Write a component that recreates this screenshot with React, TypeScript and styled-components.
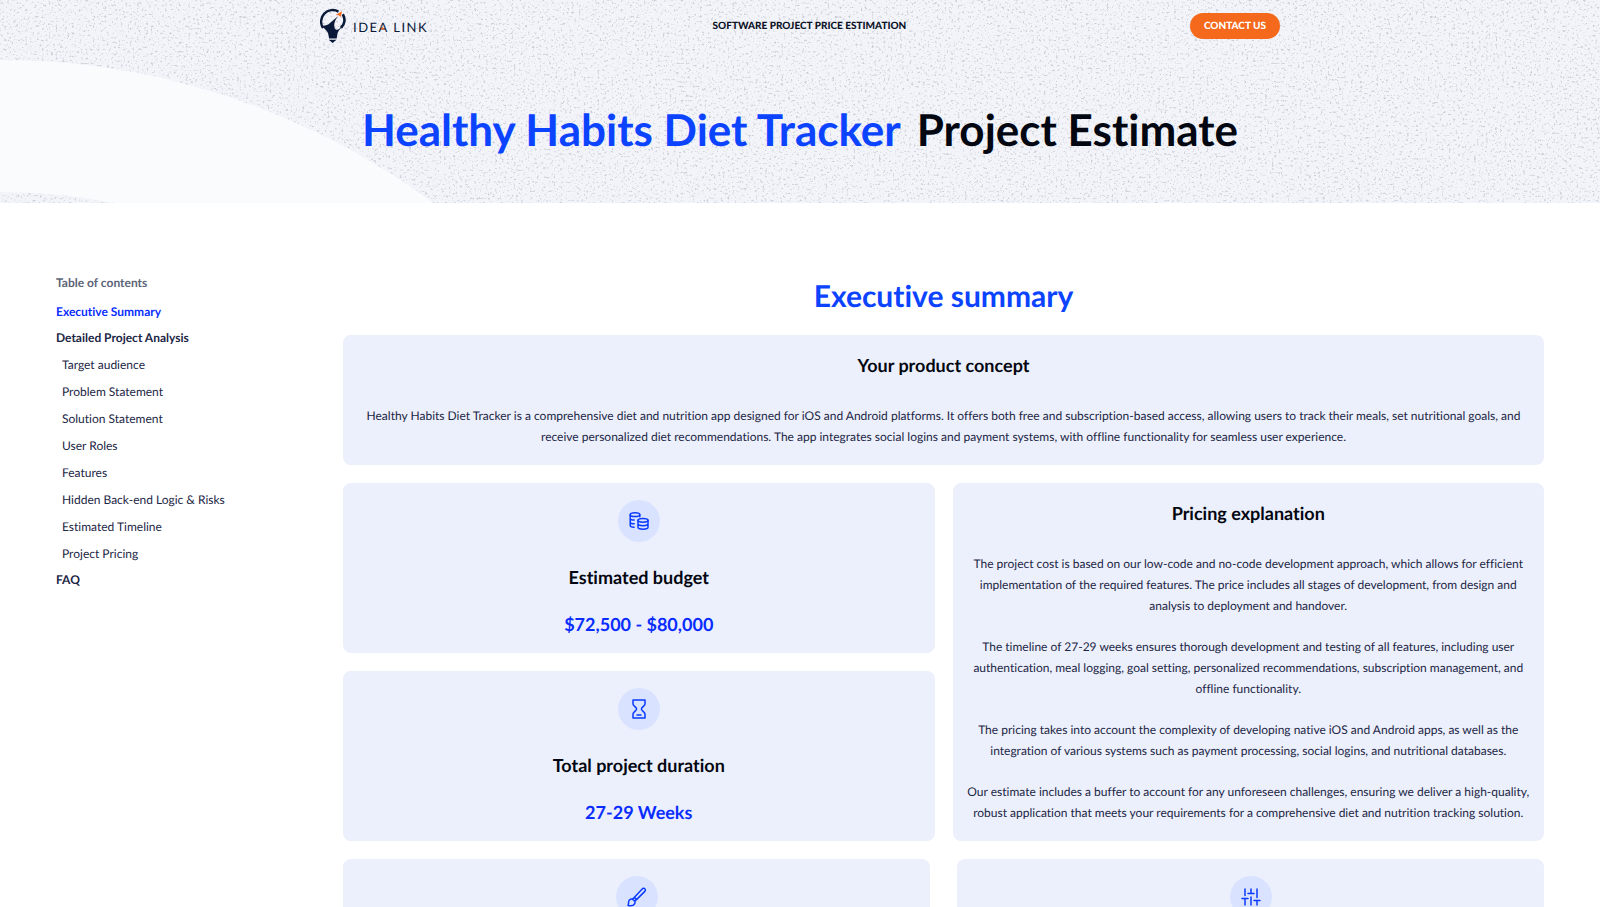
import React from "react";
import styled, { createGlobalStyle } from "styled-components";

const GlobalStyle = createGlobalStyle`
  * { box-sizing: border-box; }
  body {
    margin: 0;
    background: #ffffff;
    color: #1c2645;
    font-family: Lato, "Liberation Sans", sans-serif;
    font-size: 12px;
    line-height: 21px;
    text-rendering: geometricPrecision;
    font-variant-ligatures: no-common-ligatures;
  }
  h1, h2, h3, p, ul { margin: 0; padding: 0; }
  ul { list-style: none; }
  a { color: inherit; text-decoration: none; }
`;

const Hero = styled.div`
  position: relative;
  overflow: hidden;
  background: #f2f4f9;
  padding-bottom: 46px;
`;

const HeroArt = styled.svg`
  position: absolute;
  inset: 0;
  width: 100%;
  height: 100%;
`;

const Header = styled.header`
  position: relative;
  display: flex;
  align-items: center;
  justify-content: space-between;
  max-width: 960px;
  height: 52px;
  margin: 0 auto;
`;

const LogoLink = styled.a`
  display: flex;
`;

const HeaderLink = styled.a`
  color: #0b1226;
  font-size: 10px;
  font-weight: 900;
`;

const ContactButton = styled.button`
  height: 26px;
  padding: 0 14px;
  border: 0;
  border-radius: 13px;
  background: #f4691c;
  color: #ffffff;
  font-family: inherit;
  font-size: 10px;
  font-weight: 900;
  text-rendering: inherit;
  cursor: pointer;
`;

const Title = styled.h1`
  position: relative;
  display: flex;
  flex-wrap: wrap;
  justify-content: center;
  gap: 0 16px;
  padding-top: 52px;
  color: #030711;
  font-size: 44px;
  line-height: 53px;
`;

const Accent = styled.span`
  color: #0b43ff;
`;

const Page = styled.div`
  display: flex;
  align-items: flex-start;
  padding: 72px 56px 0;
`;

const Sidebar = styled.nav`
  flex: 0 0 287px;
`;

const TocHeading = styled.p`
  padding-bottom: 8px;
  color: #5c6478;
  font-weight: 700;
  line-height: 16px;
`;

const TocItem = styled.li<{ $sub?: boolean }>`
  padding-left: ${(p) => (p.$sub ? 6 : 0)}px;
  font-weight: ${(p) => (p.$sub ? 400 : 700)};
  line-height: ${(p) => (p.$sub ? 27 : 26)}px;
`;

const TocLink = styled.a<{ $active?: boolean }>`
  color: ${(p) => (p.$active ? "#0a2dff" : "#1c2645")};
`;

const Main = styled.main`
  flex: 1;
  min-width: 0;
  display: flex;
  flex-direction: column;
  gap: 18px;
`;

const SectionTitle = styled.h2`
  color: #0b43ff;
  font-size: 30px;
  line-height: 42px;
  text-align: center;
`;

const Columns = styled.div<{ $gap: number }>`
  display: grid;
  grid-template-columns: 1fr 1fr;
  gap: ${(p) => p.$gap}px;
`;

const Stack = styled.div`
  display: grid;
  gap: 18px;
`;

const Card = styled.section`
  padding: 17px 12px 18px;
  border-radius: 8px;
  background: #ecf0fc;
  text-align: center;
`;

const CardTitle = styled.h3`
  color: #030711;
  font-size: 18px;
  line-height: 27px;
`;

const Paragraphs = styled.div`
  display: grid;
  gap: 20px;
  padding-top: 26px;
`;

const StatCard = styled(Card)`
  display: flex;
  flex-direction: column;
  align-items: center;
  gap: 20px;
  padding-bottom: 15px;
`;

const IconCircle = styled.span`
  display: grid;
  place-items: center;
  width: 42px;
  height: 42px;
  margin-bottom: 2px;
  border-radius: 50%;
  background: #d9e2ff;
`;

const Value = styled.p`
  color: #0a2dff;
  font-size: 18px;
  font-weight: 700;
  line-height: 27px;
`;

const Icon = ({ children }: { children: React.ReactNode }) => (
  <svg width="20" height="20" viewBox="0 0 20 20" fill="none" stroke="#0b3bff" strokeWidth="1.5" strokeLinecap="round" strokeLinejoin="round" aria-hidden="true">
    {children}
  </svg>
);

const CoinsIcon = () => (
  <Icon>
    <ellipse cx="6" cy="3.7" rx="4.8" ry="1.9" />
    <path d="M1.2 3.7v10.8c0 .9 1.5 1.7 3.9 1.8M1.2 7.3c0 1 1.6 1.8 4 1.8M1.2 10.9c0 1 1.6 1.8 4 1.8M10.8 3.7v2" />
    <ellipse cx="14" cy="9.3" rx="5" ry="1.9" />
    <path d="M9 9.3v7c0 1 2.2 1.9 5 1.9s5-.9 5-1.9v-7M9 12.8c0 1 2.2 1.9 5 1.9s5-.9 5-1.9" />
  </Icon>
);

const HourglassIcon = () => (
  <Icon>
    <path d="M4 1h12v4c0 2-3.600 3.200-3.600 5s3.600 3 3.600 5v4H4v-4c0-2 3.600-3.200 3.600-5S4 7 4 5V1ZM8 16h4" />
  </Icon>
);

const BrushIcon = () => (
  <Icon>
    <path d="m7.200 10.500 8-8.500c.7-.8 1.900-.9 2.600-.2.8.7.7 1.900 0 2.600l-8.300 8.200ZM7.200 10.500c1 .3 2 1.200 2.300 2.100l-1.700 1.700-2.300-2.200ZM5.500 12.100c-2.500-.4-4.300 1.400-3.900 3.900l-.5 2.500c2.600.6 5.500.2 6.500-1.700.4-.8.5-1.700.2-2.500" />
  </Icon>
);

const SlidersIcon = () => (
  <Icon>
    <path d="M4 2v6.500M1 11.500h6M4 11.500V18M10 2v4.500M7 6.500h6M10 10v8M16 2v8.500M13 13.500h6M16 13.500V18" />
  </Icon>
);

const Logo = () => (
  <svg width="109" height="36" viewBox="0 0 109 36" role="img" aria-label="Idea Link">
    <path d="M18.500 3.600A11.600 11.600 0 0 0 3 20" fill="none" stroke="#0a1938" strokeWidth="2.400" />
    <path d="M22.800 6.200c2.800 4.600 1.800 9.800-1.800 13.600" fill="none" stroke="#0a1938" strokeWidth="2.600" />
    <path d="M1.500 17.500c3 .5 6.200-.2 8.500-2.500l8.300-6.900c-3 3.800-4.600 6.900-3.800 11.400.4 1.500 1.400 2.300 2.500 2.300 3 0 3.800-3.500 6-5.200-1.500 4.400-4.600 5.300-5.600 9.400l-.7 4.600H9.100l-.8-4.600C7.400 22.300 3.600 20.600 1.500 17.500Z" fill="#0a1938" />
    <path d="M8.700 31.700h7.800l-3.900 3.400Z" fill="#0a1938" />
    <path d="M22 3.200 20.800 9l-2-1.800-3.200-.3Z" fill="#f4691c" />
    <text x="33" y="24" fill="#0a1938" fontFamily="Lato, sans-serif" fontSize="13" fontWeight="400" letterSpacing="1.500">IDEA LINK</text>
    <path d="m62.500 18.500 1.800 3h-3.600Z" fill="#f4691c" />
  </svg>
);

const toc = [
  { label: "Executive Summary", active: true },
  { label: "Detailed Project Analysis" },
  { label: "Target audience", sub: true },
  { label: "Problem Statement", sub: true },
  { label: "Solution Statement", sub: true },
  { label: "User Roles", sub: true },
  { label: "Features", sub: true },
  { label: "Hidden Back-end Logic & Risks", sub: true },
  { label: "Estimated Timeline", sub: true },
  { label: "Project Pricing", sub: true },
  { label: "FAQ" },
];

const pricing = [
  "The project cost is based on our low-code and no-code development approach, which allows for efficient implementation of the required features. The price includes all stages of development, from design and analysis to deployment and handover.",
  "The timeline of 27-29 weeks ensures thorough development and testing of all features, including user authentication, meal logging, goal setting, personalized recommendations, subscription management, and offline functionality.",
  "The pricing takes into account the complexity of developing native iOS and Android apps, as well as the integration of various systems such as payment processing, social logins, and nutritional databases.",
  "Our estimate includes a buffer to account for any unforeseen challenges, ensuring we deliver a high-quality, robust application that meets your requirements for a comprehensive diet and nutrition tracking solution.",
];

export default function App() {
  return (
    <>
      <GlobalStyle />
      <Hero>
        <HeroArt aria-hidden="true">
          <filter id="speckle" x="0" y="0" width="100%" height="100%">
            <feTurbulence type="fractalNoise" baseFrequency="0.43" numOctaves="3" seed="11" />
            <feColorMatrix values="0 0 0 0 0.62  0 0 0 0 0.63  0 0 0 0 0.69  5 0 0 0 -2.900" />
          </filter>
          <rect width="100%" height="100%" filter="url(#speckle)" />
          <circle cx="0" cy="787" r="661" fill="none" stroke="#fafbfd" strokeWidth="132" />
        </HeroArt>
        <Header>
          <LogoLink href="#home"><Logo /></LogoLink>
          <HeaderLink href="#estimation">SOFTWARE PROJECT PRICE ESTIMATION</HeaderLink>
          <ContactButton type="button">CONTACT US</ContactButton>
        </Header>
        <Title>
          <Accent>Healthy Habits Diet Tracker</Accent>
          <span>Project Estimate</span>
        </Title>
      </Hero>
      <Page>
        <Sidebar aria-label="Table of contents">
          <TocHeading>Table of contents</TocHeading>
          <ul>
            {toc.map((t) => (
              <TocItem key={t.label} $sub={t.sub}>
                <TocLink href="#summary" $active={t.active}>{t.label}</TocLink>
              </TocItem>
            ))}
          </ul>
        </Sidebar>
        <Main id="summary">
          <SectionTitle>Executive summary</SectionTitle>
          <Card>
            <CardTitle>Your product concept</CardTitle>
            <Paragraphs>
              <p>
                Healthy Habits Diet Tracker is a comprehensive diet and nutrition app designed for iOS and Android platforms. It offers both free and subscription-based access, allowing users to track their meals, set nutritional goals, and receive personalized diet recommendations. The app integrates social logins and payment systems, with offline functionality for seamless user experience.
              </p>
            </Paragraphs>
          </Card>
          <Columns $gap={18}>
            <Stack>
              <StatCard>
                <IconCircle><CoinsIcon /></IconCircle>
                <CardTitle>Estimated budget</CardTitle>
                <Value>$72,500 - $80,000</Value>
              </StatCard>
              <StatCard>
                <IconCircle><HourglassIcon /></IconCircle>
                <CardTitle>Total project duration</CardTitle>
                <Value>27-29 Weeks</Value>
              </StatCard>
            </Stack>
            <Card>
              <CardTitle>Pricing explanation</CardTitle>
              <Paragraphs>
                {pricing.map((text) => <p key={text}>{text}</p>)}
              </Paragraphs>
            </Card>
          </Columns>
          <Columns $gap={27}>
            <StatCard>
              <IconCircle><BrushIcon /></IconCircle>
            </StatCard>
            <StatCard>
              <IconCircle><SlidersIcon /></IconCircle>
            </StatCard>
          </Columns>
        </Main>
      </Page>
    </>
  );
}
